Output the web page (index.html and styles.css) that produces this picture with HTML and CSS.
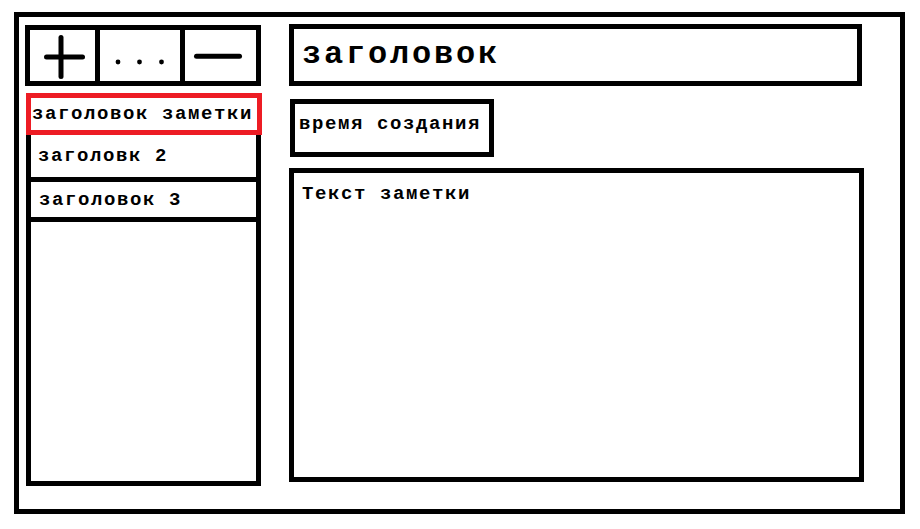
FILE: index.html
```html
<!DOCTYPE html>
<html lang="ru">
<head>
<meta charset="utf-8">
<title>Заметки</title>
<link rel="stylesheet" href="styles.css">
</head>
<body>
<div class="frame">
  <div class="sidebar">
    <div class="toolbar">
      <div class="tool tool-add">
        <svg width="65" height="51" viewBox="0 0 65 51"><line x1="16.5" y1="27" x2="52.5" y2="27"/><line x1="31" y1="7.5" x2="31" y2="46.5"/></svg>
      </div>
      <div class="tool tool-more">
        <svg width="80" height="51" viewBox="0 0 80 51"><circle cx="18" cy="32" r="2.4"/><circle cx="39.5" cy="32" r="2.4"/><circle cx="61.5" cy="32" r="2.4"/></svg>
      </div>
      <div class="tool tool-remove">
        <svg width="71" height="51" viewBox="0 0 71 51"><line x1="11.5" y1="26.3" x2="54.5" y2="26.3"/></svg>
      </div>
    </div>
    <div class="note-list">
      <div class="note-item note-item-active">заголовок заметки</div>
      <div class="note-item note-item-tall">заголовк 2</div>
      <div class="note-item note-item-short">заголовок 3</div>
    </div>
  </div>
  <div class="editor">
    <div class="title-box">заголовок</div>
    <div class="time-box">время создания</div>
    <div class="text-box">Текст заметки</div>
  </div>
</div>
</body>
</html>
```
FILE: styles.css
```css
* { box-sizing: border-box; }
html, body { margin: 0; padding: 0; background: #fff; }
body {
  font-family: "Liberation Mono", "DejaVu Sans Mono", monospace;
  font-weight: bold;
  color: #000;
  font-size: 19px;
  letter-spacing: 1.6px;
  line-height: 20px;
  white-space: nowrap;
}
.frame {
  margin: 12px 0 0 14px;
  width: 891px;
  height: 502px;
  border: 5px solid #000;
  padding: 7px 0 0 6px;
  display: flex;
  align-items: flex-start;
}
.sidebar {
  width: 236px;
  padding-top: 1px;
  display: flex;
  flex-direction: column;
}
.toolbar {
  display: flex;
  height: 61px;
  border: 5px solid #000;
}
.tool { height: 51px; }
.tool svg { display: block; }
.tool line { stroke: #000; stroke-width: 5; stroke-linecap: round; }
.tool circle { fill: #000; }
.tool-add { width: 65px; }
.tool-more { width: 85px; border-left: 5px solid #000; }
.tool-remove { width: 76px; border-left: 5px solid #000; }
.note-list {
  margin: 7px 0 0 1px;
  width: 235px;
  height: 393px;
  border: 5px solid #000;
  display: flex;
  flex-direction: column;
}
.note-item {
  display: flex;
  align-items: center;
  padding-left: 7px;
  border-bottom: 5px solid #000;
}
.note-item-active {
  margin: -5px -6px 0 -5px;
  height: 42px;
  padding-left: 1px;
  border: 5px solid #ed1c24;
  background: #fff;
}
.note-item-tall { height: 47px; }
.note-item-short { height: 40px; padding-left: 8px; }
.editor {
  margin-left: 28px;
  display: flex;
  flex-direction: column;
  align-items: flex-start;
}
.title-box {
  width: 573px;
  height: 62px;
  border: 5px solid #000;
  padding-left: 8px;
  display: flex;
  align-items: center;
  font-size: 32px;
  letter-spacing: 2.8px;
  line-height: 34px;
}
.time-box {
  margin: 13px 0 0 1px;
  width: 204px;
  height: 58px;
  border: 5px solid #000;
  padding: 10px 0 0 4px;
}
.text-box {
  margin-top: 11px;
  width: 575px;
  height: 314px;
  border: 5px solid #000;
  padding: 11px 0 0 8px;
}
```
